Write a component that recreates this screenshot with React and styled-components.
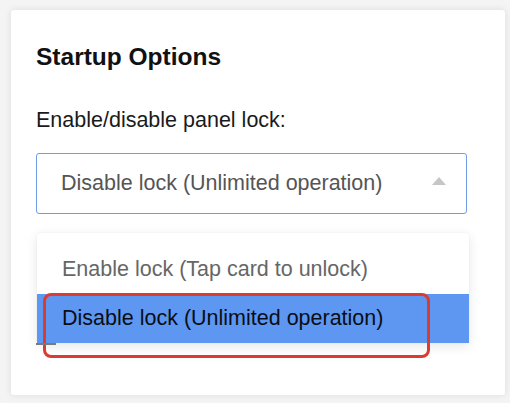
import styled, { createGlobalStyle } from 'styled-components'

const GlobalStyle = createGlobalStyle`
    html, body {
        margin: 0;
        padding: 0;
        background: #f4f4f4;
        font-family: "Liberation Sans", Arial, Helvetica, sans-serif;
    }
`

const Page = styled.div`
    width: 510px;
    height: 403px;
    padding: 10px 5px 0 11px;
    box-sizing: border-box;
    overflow: hidden;
`

const Card = styled.div`
    height: 385px;
    background: #fff;
    border-radius: 3px;
    box-shadow: 0 0 7px rgba(0, 0, 0, 0.1);
    padding: 33px 38px 0 25px;
    box-sizing: border-box;
    display: flex;
    flex-direction: column;
`

const Title = styled.h2`
    margin: 0;
    font-size: 24.5px;
    line-height: 28px;
    font-weight: 700;
    color: #111;
`

const Label = styled.div`
    margin-top: 37px;
    font-size: 21.5px;
    line-height: 25px;
    color: #1a1a1a;
`

const Select = styled.div`
    margin-top: 20px;
    height: 61px;
    width: 431px;
    box-sizing: border-box;
    border: 1px solid #6f9de6;
    border-radius: 3px;
    padding: 0 20px 0 24px;
    display: flex;
    align-items: center;
    justify-content: space-between;
    font-size: 21.5px;
    color: #555;
`

const Caret = styled.span`
    width: 0;
    height: 0;
    border-left: 7.5px solid transparent;
    border-right: 7.5px solid transparent;
    border-bottom: 8px solid #c6c6c6;
    margin-top: -5px;
`

const Menu = styled.div`
    position: relative;
    margin-top: 19px;
    margin-left: 1px;
    width: 432px;
    background: #fff;
    border-radius: 3px;
    padding-top: 12px;
    box-shadow: 0 3px 12px rgba(0, 0, 0, 0.1), 0 0 1px rgba(0, 0, 0, 0.12);

    &::after {
        content: '';
        position: absolute;
        left: -1px;
        top: 110px;
        width: 20px;
        height: 1.5px;
        background: #7a7a7a;
    }
`

const Option = styled.div`
    height: 49px;
    display: flex;
    align-items: center;
    padding-left: 25px;
    font-size: 21.5px;
    color: ${({ active }) => (active ? '#0a0e14' : '#666')};
    background: ${({ active }) => (active ? '#5e97f2' : 'transparent')};
`

const Highlight = styled.div`
    position: absolute;
    left: 6px;
    top: 60px;
    width: 387px;
    height: 65px;
    box-sizing: border-box;
    border: 3.5px solid #dc3b2f;
    border-radius: 8px;
    pointer-events: none;
`

const options = [
    'Enable lock (Tap card to unlock)',
    'Disable lock (Unlimited operation)',
]

export default function App() {
    const selected = 1
    return (
        <>
            <GlobalStyle />
            <Page>
                <Card>
                    <Title>Startup Options</Title>
                    <Label>Enable/disable panel lock:</Label>
                    <Select>
                        {options[selected]}
                        <Caret />
                    </Select>
                    <Menu>
                        {options.map((opt, i) => (
                            <Option key={opt} active={i === selected}>{opt}</Option>
                        ))}
                        <Highlight />
                    </Menu>
                </Card>
            </Page>
        </>
    )
}
